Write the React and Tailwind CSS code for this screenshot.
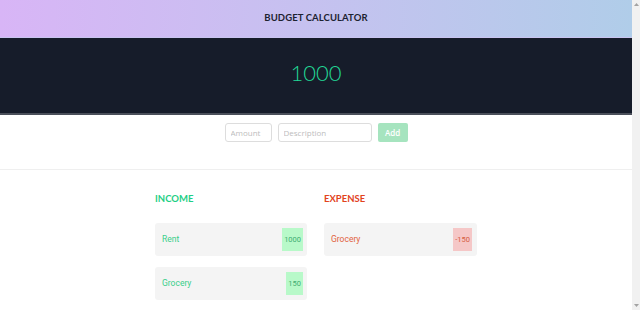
export default function App() {
  const income = [
    { d: "Rent", v: "1000" },
    { d: "Grocery", v: "150" },
  ];
  const expense = [{ d: "Grocery", v: "-150" }];
  return (
    <div className="flex h-[310px] overflow-hidden bg-white" style={{ fontFamily: "Lato, 'Open Sans', sans-serif" }}>
      <div className="w-[632px] shrink-0">
        <header className="h-[38px] flex items-center justify-center bg-gradient-to-r from-[#d8b5f6] to-[#b0cde9] border-b border-[#c9c4f0]">
          <h1 className="text-[9.5px] font-bold text-[#1c2230] tracking-[0.1px]">BUDGET CALCULATOR</h1>
        </header>
        <section className="h-[77px] bg-[#161c2a] border-b-2 border-[#4a4f5a] flex items-center justify-center pb-[6px]">
          <span className="text-[22px] font-light text-[#22d896] leading-none">1000</span>
        </section>
        <section className="h-[55px] border-b border-[#efefef] flex justify-center items-start pt-[8px] gap-[6px]">
          <input
            placeholder="Amount"
            className="w-[47px] h-[19px] border border-[#dddddd] rounded-[3px] px-[5px] text-[8px] placeholder:text-[#bdbdbd] outline-none"
            style={{ fontFamily: "'Open Sans', sans-serif" }}
          />
          <input
            placeholder="Description"
            className="w-[94px] h-[19px] border border-[#dddddd] rounded-[3px] px-[5px] text-[8px] placeholder:text-[#bdbdbd] outline-none"
            style={{ fontFamily: "'Open Sans', sans-serif" }}
          />
          <button
            className="w-[30px] h-[19px] rounded-[2px] bg-[#a6e4bf] text-white text-[8px] font-semibold"
            style={{ fontFamily: "'Open Sans', sans-serif" }}
          >
            Add
          </button>
        </section>
        <main className="flex justify-center gap-[17px] pt-[23px]">
          <div className="w-[152px]">
            <h2 className="text-[9.5px] font-bold text-[#1fcf86] h-[12px] leading-[12px]">INCOME</h2>
            <div className="mt-[18px] flex flex-col gap-[11px]">
              {income.map((it, i) => (
                <div key={i} className="h-[33px] bg-[#f4f4f4] rounded-[3px] flex items-center justify-between pl-[7px] pr-[4px]">
                  <span className="text-[8.5px] text-[#39cf8a]" style={{ fontFamily: "Roboto, sans-serif" }}>{it.d}</span>
                  <span className="h-[23px] px-[2px] flex items-center bg-[#b8f9c9] text-[7.5px] text-[#3fae72]" style={{ fontFamily: "Roboto, sans-serif" }}>{it.v}</span>
                </div>
              ))}
            </div>
          </div>
          <div className="w-[153px]">
            <h2 className="text-[9.5px] font-bold text-[#e2431d] h-[12px] leading-[12px]">EXPENSE</h2>
            <div className="mt-[18px] flex flex-col gap-[11px]">
              {expense.map((it, i) => (
                <div key={i} className="h-[33px] bg-[#f4f4f4] rounded-[3px] flex items-center justify-between pl-[7px] pr-[5px]">
                  <span className="text-[8.5px] text-[#e2623f]" style={{ fontFamily: "Roboto, sans-serif" }}>{it.d}</span>
                  <span className="h-[23px] px-[2px] flex items-center bg-[#f5c7c7] text-[7.5px] text-[#d55c42]" style={{ fontFamily: "Roboto, sans-serif" }}>{it.v}</span>
                </div>
              ))}
            </div>
          </div>
        </main>
      </div>
      <aside className="w-[8px] shrink-0 bg-[#f1f1f1] flex flex-col items-center justify-between py-[3px]">
        <svg width="5" height="3" viewBox="0 0 5 3"><path d="M2.5 0 L5 3 L0 3 Z" fill="#a3a3a3" /></svg>
        <svg width="5" height="3" viewBox="0 0 5 3"><path d="M0 0 L5 0 L2.5 3 Z" fill="#a3a3a3" /></svg>
      </aside>
    </div>
  );
}
